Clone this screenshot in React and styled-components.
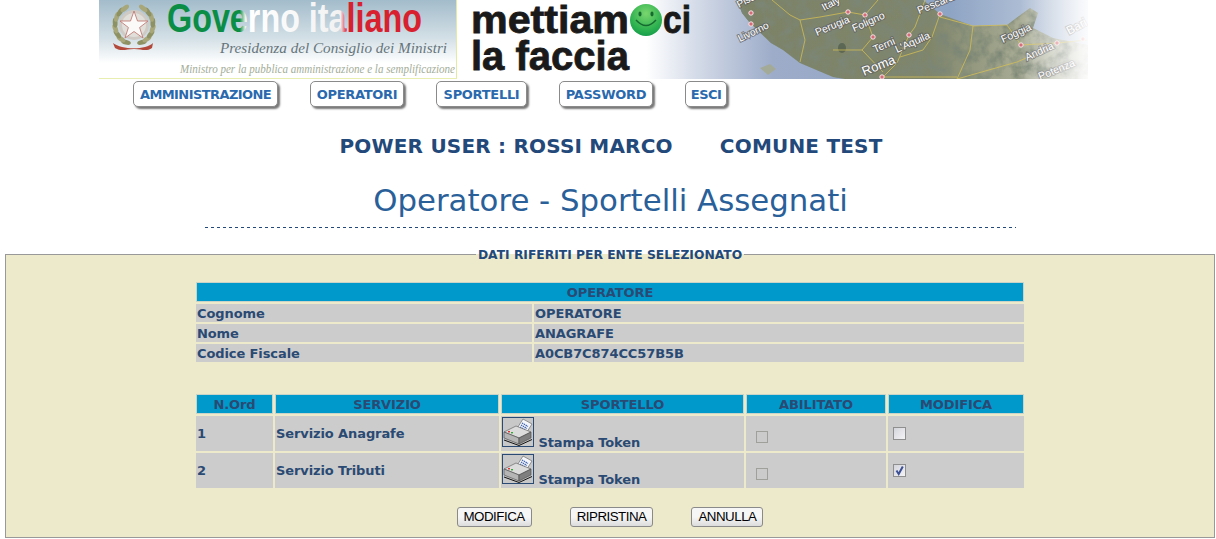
import React from 'react'
import styled, { createGlobalStyle } from 'styled-components'

const GlobalStyle = createGlobalStyle`
  html, body {
    margin: 0;
    padding: 0;
    background: #fff;
    overflow: hidden;
  }
  body {
    font-family: "DejaVu Sans", Verdana, sans-serif;
    color: #2a4a73;
  }
`

const leaves = [25, 43, 61, 79, 97, 115, 133, 151]

const mapPins = [
  [751, 13], [751, 24], [848, 12], [865, 15], [873, 37], [909, 35],
  [940, 14], [1021, 45], [1057, 43], [1083, 39], [882, 77],
]

const mapLabels = [
  { name: 'Pisa', x: 739, y: 8, size: 10, angle: -28 },
  { name: 'Livorno', x: 740, y: 42, size: 10, angle: -26 },
  { name: 'Italy', x: 824, y: 11, size: 10.5, angle: -28 },
  { name: 'Perugia', x: 817, y: 36, size: 10.5, angle: -23 },
  { name: 'Foligno', x: 854, y: 32, size: 10.5, angle: -24 },
  { name: 'Terni', x: 875, y: 53, size: 10.5, angle: -24 },
  { name: "L'Aquila", x: 897, y: 53, size: 10.5, angle: -24 },
  { name: 'Roma', x: 864, y: 76, size: 13, angle: -22 },
  { name: 'Pescara', x: 919, y: 14, size: 10.5, angle: -22 },
  { name: 'Foggia', x: 1003, y: 43, size: 10.5, angle: -25 },
  { name: 'Andria', x: 1027, y: 61, size: 10.5, angle: -25 },
  { name: 'Potenza', x: 1040, y: 80, size: 10.5, angle: -22 },
  { name: 'Bari', x: 1069, y: 35, size: 12, angle: -28 },
]

const Banner = () => (
  <BannerSvg viewBox="99 0 989 79" width="989" height="79">
    <defs>
      <linearGradient id="sky" x1="0" y1="0" x2="0" y2="1">
        <stop offset="0" stopColor="#a3bccb" />
        <stop offset="0.5" stopColor="#d5e1e7" />
        <stop offset="0.8" stopColor="#ffffff" />
      </linearGradient>
      <linearGradient id="sea" x1="0" y1="0" x2="1" y2="0">
        <stop offset="0" stopColor="#fff" />
        <stop offset="0.3" stopColor="#fff" />
        <stop offset="0.38" stopColor="#d4dbe8" />
        <stop offset="0.5" stopColor="#9dacc9" />
        <stop offset="0.78" stopColor="#8ea4c4" />
        <stop offset="1" stopColor="#c9d3e2" />
      </linearGradient>
      <linearGradient id="land" gradientUnits="userSpaceOnUse" x1="737" y1="0" x2="1088" y2="0">
        <stop offset="0" stopColor="#7c8265" />
        <stop offset="0.55" stopColor="#80866a" />
        <stop offset="0.8" stopColor="#a7ab94" />
        <stop offset="1" stopColor="#cfd1c4" />
      </linearGradient>
      <linearGradient id="fade" x1="0" y1="0" x2="1" y2="0">
        <stop offset="0" stopColor="#fff" stopOpacity="0" />
        <stop offset="1" stopColor="#fff" stopOpacity="0.92" />
      </linearGradient>
      <linearGradient id="gover" x1="0" y1="0" x2="1" y2="0">
        <stop offset="0" stopColor="#0b8d45" />
        <stop offset="0.285" stopColor="#0b8d45" />
        <stop offset="0.31" stopColor="#ffffff" />
        <stop offset="0.68" stopColor="#f2f2f2" />
        <stop offset="0.705" stopColor="#d8202f" />
        <stop offset="1" stopColor="#d8202f" />
      </linearGradient>
      <radialGradient id="smile" cx="0.5" cy="0.3" r="0.75">
        <stop offset="0" stopColor="#7ad66e" />
        <stop offset="0.7" stopColor="#2bb04f" />
        <stop offset="1" stopColor="#12994a" />
      </radialGradient>
      <filter id="grain" x="0" y="0" width="100%" height="100%">
        <feTurbulence type="fractalNoise" baseFrequency="0.08" numOctaves="4" seed="4" />
        <feColorMatrix values="0 0 0 0 0.2  0 0 0 0 0.24  0 0 0 0 0.18  2.4 0 0 0 -0.85" />
        <feComposite in2="SourceAlpha" operator="in" />
        <feMerge>
          <feMergeNode in="SourceGraphic" />
          <feMergeNode />
        </feMerge>
      </filter>
    </defs>

    <rect x="99" y="0" width="358" height="79" fill="url(#sky)" />
    <rect x="456" y="0" width="1" height="79" fill="#e3eba0" />
    <rect x="99" y="78" width="358" height="1" fill="#e8eeb0" />

    {/* emblem */}
    <g>
      {leaves.map((a) => (
        <g key={a}>
          <ellipse cx="134" cy="44" rx="2.4" ry="5" fill={a % 4 === 1 ? '#8e9162' : '#a8a77a'} transform={`rotate(${a} 134 25) rotate(80 134 44)`} />
          <ellipse cx="134" cy="44" rx="2.4" ry="5" fill={a % 4 === 1 ? '#8e9162' : '#a8a77a'} transform={`rotate(${-a} 134 25) rotate(-80 134 44)`} />
        </g>
      ))}
      <circle cx="134" cy="25" r="15" fill="#cfcbc4" />
      <circle cx="134" cy="25" r="12" fill="#e1dfda" />
      <polygon points="134,11 137.5,21 148,21 139.6,27.5 143,38 134,31.5 125,38 128.4,27.5 120,21 130.5,21" fill="#fbfaf8" stroke="#bd6f68" strokeWidth="0.8" />
      <path d="M113 43 C122 50 146 50 153 43 L152 48 C146 52 142 49 134 49 C126 49 122 52 115 48Z" fill="#b3493a" />
    </g>

    <GovernoText x="167" y="32" fontSize="41" textLength="255" lengthAdjust="spacingAndGlyphs" fill="url(#gover)">
      Governo italiano
    </GovernoText>
    <ScriptText x="220" y="53" fontSize="15.5" textLength="227" lengthAdjust="spacingAndGlyphs" fill="#66757b">
      Presidenza del Consiglio dei Ministri
    </ScriptText>
    <ScriptText x="180" y="73" fontSize="11.5" textLength="275" lengthAdjust="spacingAndGlyphs" fill="#a3ad98">
      Ministro per la pubblica amministrazione e la semplificazione
    </ScriptText>

    {/* map */}
    <rect x="457" y="0" width="631" height="79" fill="url(#sea)" />
    <path
      d="M737 0 L742 13 L750 23 L771 43 L783 50 L800 63 L833 77 L845 79 L1088 79 L1088 45 L1053 38 L1033 28 L1038 13 L1030 8 L1007 25 L973 26 L940 14 L923 0 Z"
      fill="url(#land)"
      filter="url(#grain)"
    />
    <ellipse cx="842" cy="48" rx="4" ry="5" fill="#4e5a48" opacity="0.7" />
    <g fill="none" stroke="#d6bf55" strokeWidth="0.9" opacity="0.85">
      <path d="M878 0 L865 15 L873 37 L862 50 L883 72" />
      <path d="M925 0 L915 27 L909 35 L897 63 L883 77" />
      <path d="M940 14 L932 37 L923 50 L900 57" />
      <path d="M940 17 L973 26 L1007 25 L1021 45 L1057 43 L1087 40" />
      <path d="M973 26 L970 50 L957 79" />
      <path d="M883 77 L957 77" />
      <path d="M800 20 L820 17 L848 12 L865 15" />
      <path d="M833 50 L862 50" />
      <path d="M957 79 L1017 62 L1033 55" />
      <path d="M772 0 L790 15 L800 20 L805 40 L800 62" />
    </g>
    <path d="M760 68 L770 64 L776 69 L768 75Z" fill="#a4aa98" />

    <g fill="#d86a78" stroke="#f4e6e6" strokeWidth="1">
      {mapPins.map(([cx, cy]) => (
        <circle key={`${cx}-${cy}`} cx={cx} cy={cy} r="2.2" />
      ))}
    </g>
    {mapLabels.map((l) => (
      <MapLabel key={l.name} x={l.x} y={l.y} fontSize={l.size} transform={`rotate(${l.angle} ${l.x} ${l.y})`}>
        {l.name}
      </MapLabel>
    ))}
    <rect x="1020" y="0" width="68" height="79" fill="url(#fade)" />

    {/* slogan */}
    <SloganText x="471" y="33" fontSize="39" textLength="158" lengthAdjust="spacingAndGlyphs">mettiam</SloganText>
    <circle cx="646" cy="20" r="16" fill="url(#smile)" />
    <ellipse cx="640" cy="14" rx="1.6" ry="2.4" fill="#156a30" />
    <ellipse cx="652" cy="14" rx="1.6" ry="2.4" fill="#156a30" />
    <path d="M636 20 Q646 31 656 20" fill="none" stroke="#156a30" strokeWidth="1.5" />
    <SloganText x="663" y="33" fontSize="39" textLength="28" lengthAdjust="spacingAndGlyphs">ci</SloganText>
    <SloganText x="471" y="70" fontSize="41" textLength="158" lengthAdjust="spacingAndGlyphs">la faccia</SloganText>
  </BannerSvg>
)

const PrinterIcon = () => (
  <PrinterBox viewBox="0 0 30 28">
    <polygon points="13,12 20,1 29,6 22,17" fill="#f4f6fa" stroke="#6d6d6d" strokeWidth="0.7" />
    <path d="M19 5 L25 8.5 M18 7 L24 10.5 M17 9 L23 12.5" stroke="#3c63b0" strokeWidth="1.3" strokeDasharray="1.4 0.7" />
    <polygon points="1,14 13,8 28,14 16,20" fill="#dcdcdc" stroke="#555" strokeWidth="0.6" />
    <polygon points="1,14 16,20 16,26 1,20" fill="#b5b5b5" stroke="#444" strokeWidth="0.6" />
    <polygon points="16,20 28,14 28,20 16,26" fill="#7f7f7f" stroke="#444" strokeWidth="0.6" />
    <rect x="5" y="13" width="2" height="1.4" fill="#d33" />
    <rect x="8" y="14" width="2" height="1.4" fill="#3a3" />
    <path d="M1 22 L16 27.5 L29 21.5" fill="none" stroke="#111" strokeWidth="1" />
  </PrinterBox>
)

const sportelli = [
  { ord: 1, servizio: 'Servizio Anagrafe', modifica: false },
  { ord: 2, servizio: 'Servizio Tributi', modifica: true },
]

const App = () => (
  <Page>
    <GlobalStyle />
    <Banner />
    <Nav>
      <NavButton $width={145} $tight>AMMINISTRAZIONE</NavButton>
      <NavButton $width={94}>OPERATORI</NavButton>
      <NavButton $width={91}>SPORTELLI</NavButton>
      <NavButton $width={94}>PASSWORD</NavButton>
      <NavButton $width={42} $tight>ESCI</NavButton>
    </Nav>
    <UserLine>
      <span>POWER USER : ROSSI MARCO</span>
      <span>COMUNE TEST</span>
    </UserLine>
    <Title>Operatore - Sportelli Assegnati</Title>
    <Rule />
    <Panel>
      <Legend>DATI RIFERITI PER ENTE SELEZIONATO</Legend>
      <InfoTable>
        <colgroup>
          <col width="336" />
          <col width="490" />
        </colgroup>
        <tbody>
          <tr>
            <Head colSpan="2">OPERATORE</Head>
          </tr>
          <tr>
            <Cell>Cognome</Cell>
            <Cell>OPERATORE</Cell>
          </tr>
          <tr>
            <Cell>Nome</Cell>
            <Cell>ANAGRAFE</Cell>
          </tr>
          <tr>
            <Cell>Codice Fiscale</Cell>
            <Cell>A0CB7C874CC57B5B</Cell>
          </tr>
        </tbody>
      </InfoTable>
      <ServiceTable>
        <colgroup>
          <col width="77" />
          <col width="224" />
          <col width="243" />
          <col width="140" />
          <col width="136" />
        </colgroup>
        <thead>
          <tr>
            <Head>N.Ord</Head>
            <Head>SERVIZIO</Head>
            <Head>SPORTELLO</Head>
            <Head>ABILITATO</Head>
            <Head>MODIFICA</Head>
          </tr>
        </thead>
        <tbody>
          {sportelli.map((s) => (
            <tr key={s.ord}>
              <ServiceCell>{s.ord}</ServiceCell>
              <ServiceCell>{s.servizio}</ServiceCell>
              <ServiceCell $top>
                <PrinterIcon /> Stampa Token
              </ServiceCell>
              <ServiceCell>
                <DisabledCheck />
              </ServiceCell>
              <ServiceCell>
                <Check $checked={s.modifica}>
                  {s.modifica && (
                    <svg viewBox="0 0 11 11" width="11" height="11">
                      <path d="M2.5 5.5 L4.7 9 L8.8 1.5" fill="none" stroke="#3b4f94" strokeWidth="2" />
                    </svg>
                  )}
                </Check>
              </ServiceCell>
            </tr>
          ))}
        </tbody>
      </ServiceTable>
      <Actions>
        <ActionButton type="button">MODIFICA</ActionButton>
        <ActionButton type="button">RIPRISTINA</ActionButton>
        <ActionButton type="button">ANNULLA</ActionButton>
      </Actions>
    </Panel>
  </Page>
)

export default App

const Page = styled.div`
  width: 1216px;
  height: 539px;
  overflow: hidden;
`

const BannerSvg = styled.svg`
  display: block;
  margin-left: 99px;
`

const GovernoText = styled.text`
  font-family: "Liberation Sans Narrow", "Liberation Sans", sans-serif;
  font-weight: 700;
`

const ScriptText = styled.text`
  font-family: "Liberation Serif", serif;
  font-style: italic;
`

const MapLabel = styled.text`
  font-family: "Liberation Sans", sans-serif;
  fill: #fff;
  stroke: #5f5f5f;
  stroke-width: 2px;
  stroke-opacity: 0.75;
  paint-order: stroke;
`

const SloganText = styled.text`
  font-family: "Liberation Sans Narrow", "Liberation Sans", sans-serif;
  font-weight: 700;
  fill: #1a1a1a;
  stroke: #1a1a1a;
  stroke-width: 0.8px;
`

const Nav = styled.nav`
  display: flex;
  gap: 32px;
  margin: 2px 0 0 133px;
`

const NavButton = styled.a`
  display: block;
  box-sizing: border-box;
  width: ${(p) => p.$width}px;
  height: 26px;
  border: 1px solid #8a8a8a;
  border-radius: 5px;
  background: #fff;
  box-shadow: 2px 2px 2px #777;
  color: #2a69ad;
  font-size: 13px;
  font-weight: 700;
  letter-spacing: ${(p) => (p.$tight ? '-0.58px' : '-0.3px')};
  line-height: 25px;
  text-align: center;
`

const UserLine = styled.div`
  display: flex;
  justify-content: center;
  gap: 47px;
  margin-top: 25px;
  padding-left: 6px;
  font-size: 20px;
  font-weight: 700;
  letter-spacing: 0.2px;
  line-height: 28px;
  color: #23497a;
`

const Title = styled.h1`
  margin: 22px 0 0;
  padding-left: 5px;
  text-align: center;
  font-size: 30.8px;
  font-weight: 400;
  line-height: 36px;
  color: #2a6099;
`

const Rule = styled.div`
  width: 811px;
  height: 1px;
  margin: 9px 0 0 205px;
  background: repeating-linear-gradient(to right, #23497a 0 3px, transparent 3px 6px);
`

const Panel = styled.fieldset`
  box-sizing: border-box;
  width: 1210px;
  height: 291px;
  margin: 19px 0 0 5px;
  padding: 0;
  border: 1px solid #999;
  background: #ede9cb;
`

const Legend = styled.legend`
  position: relative;
  top: 1px;
  margin: 0 auto;
  padding: 0 2px;
  font-size: 12.3px;
  font-weight: 700;
  line-height: 15px;
  color: #23497a;
`

const BaseTable = styled.table`
  margin-left: 188px;
  border-collapse: separate;
  border-spacing: 2px;
  table-layout: fixed;
  width: 832px;
  font-size: 13px;
  font-weight: 700;
  letter-spacing: -0.1px;
  color: #2a4a73;
`

const InfoTable = styled(BaseTable)`
  margin-top: 18px;
`

const ServiceTable = styled(BaseTable)`
  margin-top: 28px;
`

const Head = styled.th`
  box-sizing: border-box;
  height: 20px;
  padding: 0;
  border: 1px solid #c9d3c8;
  background: #0099cc;
  text-align: center;
  font-weight: 700;
  color: #2a4a73;
`

const Cell = styled.td`
  box-sizing: border-box;
  height: 18px;
  padding: 0 1px;
  background: #cccccc;
  vertical-align: middle;
  white-space: nowrap;
`

const ServiceCell = styled(Cell)`
  height: 35px;
  padding-top: ${(p) => (p.$top ? '1px' : '0')};
  vertical-align: ${(p) => (p.$top ? 'top' : 'middle')};
`

const PrinterBox = styled.svg`
  display: inline-block;
  box-sizing: border-box;
  width: 32px;
  height: 30px;
  border: 1px solid #2a4a73;
  background: #c8c8c8;
`

const DisabledCheck = styled.span`
  display: block;
  box-sizing: border-box;
  width: 12px;
  height: 12px;
  margin: 7px 0 0 9px;
  border: 1px solid #a0a09a;
  background: #cbcbcb;
`

const Check = styled.span`
  display: flex;
  box-sizing: border-box;
  width: 13px;
  height: 13px;
  margin-left: 4px;
  border: 1px solid #8f8f8f;
  background: linear-gradient(135deg, #d4d5dc, #f4f4f6);
`

const Actions = styled.div`
  display: flex;
  justify-content: center;
  gap: 38px;
  margin-top: 17px;
`

const ActionButton = styled.button`
  box-sizing: border-box;
  height: 20px;
  padding: 0 6px;
  border: 1px solid #8a8a8a;
  border-radius: 3px;
  background: linear-gradient(#f6f6f6 50%, #dcdcdc);
  font-family: "Liberation Sans", Arial, sans-serif;
  font-size: 13.33px;
  letter-spacing: -0.5px;
  line-height: 18px;
  color: #000;
`
